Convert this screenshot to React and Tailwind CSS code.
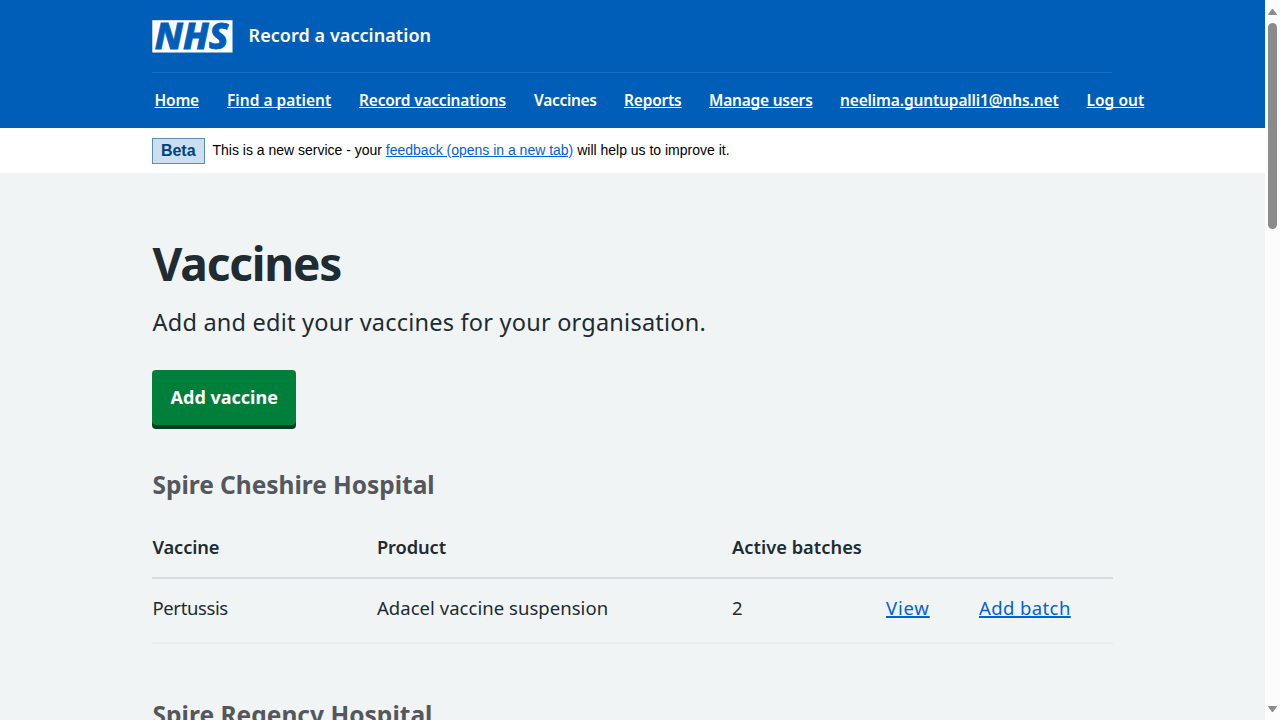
const navItems = [
  { label: "Home", style: "w-[44.5px] tracking-[-0.2px]" },
  { label: "Find a patient", style: "w-[104px] tracking-[0.01px]" },
  { label: "Record vaccinations", style: "w-[147px] tracking-[-0.2px]" },
  { label: "Vaccines", style: "w-[62px] tracking-[-0.3px]", current: true },
  { label: "Reports", style: "w-[57px] tracking-[-0.2px]" },
  { label: "Manage users", style: "w-[103px] tracking-[-0.22px]" },
  { label: "neelima.guntupalli1@nhs.net", style: "w-[218.5px] tracking-[-0.14px]" },
  { label: "Log out", style: "w-[58px] tracking-[0.04px]" },
];

function Logo() {
  return (
    <svg className="block h-[33px] w-[81px] overflow-visible" viewBox="0 0 81 33" aria-label="NHS">
      <rect x="0.3" y="0.2" width="80.2" height="32.3" fill="#fff" />
      <text x="2.8" y="29" textLength="73.5" lengthAdjust="spacingAndGlyphs" fill="#005eb8" stroke="#005eb8" strokeWidth="0.8" className="font-['Noto_Sans','Open_Sans',sans-serif] text-[36px] font-extrabold italic">
        NHS
      </text>
    </svg>
  );
}

function Header() {
  return (
    <header className="h-32 bg-[#005eb8] text-white">
      <div className="ml-[152px] flex h-[73px] w-[960px] items-start border-b border-[#1a6ebf] pt-5">
        <Logo />
        <span className="ml-[15.5px] text-[18px] leading-[30px] font-semibold tracking-[0.06px]">Record a vaccination</span>
      </div>
      <nav className="ml-[154.5px] flex gap-7 pt-[15px]">
        {navItems.map((item) => (
          <a
            key={item.label}
            className={`${item.style} text-[15.5px] leading-6 font-semibold whitespace-nowrap decoration-1 underline-offset-1 [text-decoration-skip-ink:none] ${item.current ? "" : "underline"}`}
          >
            {item.label}
          </a>
        ))}
      </nav>
    </header>
  );
}

function BetaBanner() {
  return (
    <div className="flex h-[45px] items-start bg-white pt-[10px] pl-[152px] font-['Liberation_Sans',Arial,sans-serif] text-black">
      <strong className="box-border h-[26px] w-[52.5px] border border-[#5f8bb8] bg-[#ccdff1] text-center text-base leading-6 font-bold text-[#004281]">Beta</strong>
      <p className="ml-2 text-[14px] leading-6 tracking-[-0.005px]">
        This is a new service - your{" "}
        <a className="text-[#0062dc] underline">feedback (opens in a new tab)</a> will help us to improve it.
      </p>
    </div>
  );
}

const columns = "grid grid-cols-[224.5px_355px_154px_93px_1fr]";

function VaccineTable() {
  return (
    <div className="text-[18.5px] leading-7">
      <div className={`${columns} h-[57px] border-b-2 border-[#d8dde0] pt-[11px] pl-[0.5px] text-[18.3px] font-semibold`}>
        <span className="tracking-[-0.12px]">Vaccine</span>
        <span className="tracking-[-0.12px]">Product</span>
        <span className="tracking-[0.02px]">Active batches</span>
      </div>
      <div className={`${columns} h-[65px] border-b-2 border-[#e8edee] pt-[15px] pl-[0.5px]`}>
        <span className="tracking-[-0.38px]">Pertussis</span>
        <span className="tracking-[0.04px]">Adacel vaccine suspension</span>
        <span>2</span>
        <a className="justify-self-start tracking-[0.8px] text-[#0062dc] underline decoration-2 underline-offset-1">View</a>
        <a className="justify-self-start tracking-[0.4px] text-[#0062dc] underline decoration-2 underline-offset-1">Add batch</a>
      </div>
    </div>
  );
}

function Scrollbar() {
  return (
    <div className="flex h-[720px] w-[15px] shrink-0 flex-col items-center bg-[#fcfcfc]">
      <svg className="mt-[8px] block h-2 w-[9px] shrink-0" viewBox="0 0 9 8"><path d="M4.5 1 L8.5 6.5 H.5Z" fill="#8b8b8b" stroke="#8b8b8b" strokeLinejoin="round" /></svg>
      <div className="mt-[7px] h-[206px] w-[9px] rounded-full bg-[#8b8b8b]" />
      <svg className="mt-auto mb-[7.5px] block h-2 w-[9px]" viewBox="0 0 9 8"><path d="M4.5 7 L8.5 1.5 H.5Z" fill="#8b8b8b" stroke="#8b8b8b" strokeLinejoin="round" /></svg>
    </div>
  );
}

export default function App() {
  return (
    <div className="flex h-[720px] w-[1280px] overflow-hidden bg-[#f0f4f5] font-['Noto_Sans','Open_Sans',sans-serif] text-[#212b32]">
      <div className="h-[720px] w-[1265px] overflow-hidden">
        <Header />
        <BetaBanner />
        <main className="ml-[152.5px] w-[960px]">
          <h1 className="pt-[61px] text-[46px] leading-[58px] font-bold tracking-[-1.2px]">Vaccines</h1>
          <p className="mt-[14px] text-[23.5px] leading-8 tracking-[0.22px]">Add and edit your vaccines for your organisation.</p>
          <button className="mt-[32px] -ml-[0.5px] block h-[55px] w-[143.5px] rounded-[4px] bg-[#007f3b] pl-px text-[18px] leading-[53px] font-bold text-white shadow-[0_4px_0_#00401e]">Add vaccine</button>
          <h2 className="mt-[44px] text-[24.5px] leading-8 font-bold tracking-[-0.03px] text-[#54585c]">Spire Cheshire Hospital</h2>
          <div className="mt-[21px] -ml-[0.5px]">
            <VaccineTable />
          </div>
          <h2 className="mt-[55px] text-[24.5px] leading-8 font-bold tracking-[0.03px] text-[#54585c]">Spire Regency Hospital</h2>
        </main>
      </div>
      <Scrollbar />
    </div>
  );
}
